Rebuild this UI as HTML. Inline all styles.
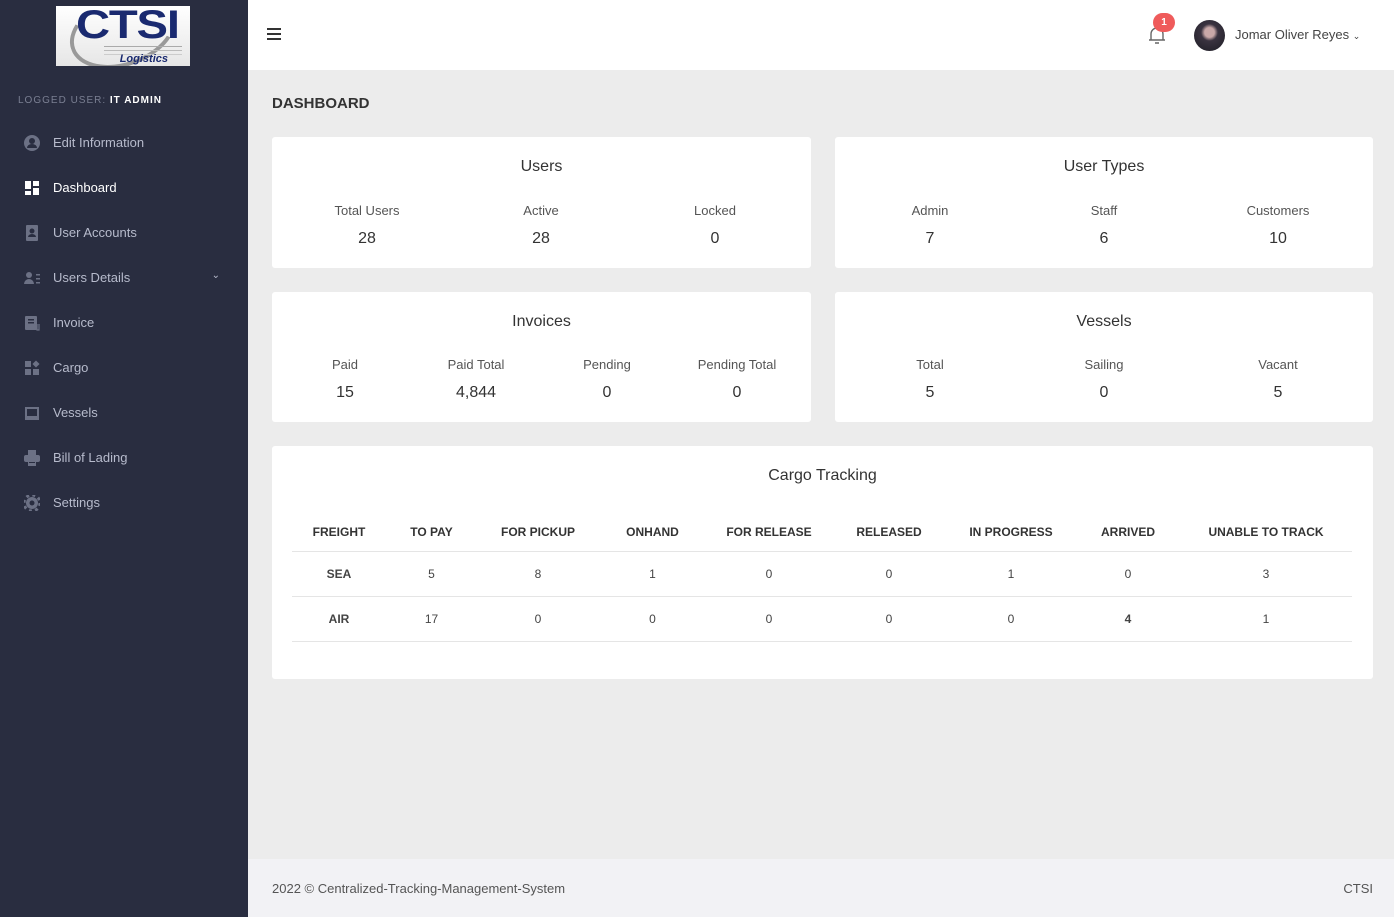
<!DOCTYPE html>
<html><head><meta charset="utf-8"><style>
*{box-sizing:border-box;margin:0;padding:0}
body{width:1394px;height:917px;font-family:"Liberation Sans",sans-serif;background:#ececec;position:relative;overflow:hidden;color:#333}
.sb{position:absolute;left:0;top:0;width:248px;height:917px;background:#292d40}
.logo{position:absolute;left:56px;top:6px;width:134px;height:60px;background:linear-gradient(#fff,#e6e6e6);overflow:hidden}
.logo .t{position:absolute;left:20px;top:-3px;font:900 40px "Liberation Sans",sans-serif;color:#1a2a70;letter-spacing:-1px;transform:scaleX(1.18);transform-origin:left}
.logo .ring{position:absolute;left:12px;top:-10px;width:110px;height:70px;border:4px solid #999;border-radius:50%;transform:rotate(-20deg);border-top-color:transparent;border-right-color:transparent}
.logo .l{position:absolute;right:22px;bottom:1px;font:italic bold 11px "Liberation Sans",sans-serif;color:#1a2a70}
.logo .ln{position:absolute;left:48px;top:40px;width:78px;height:1px;background:#aaa;box-shadow:0 4px 0 #bbb,0 8px 0 #ccc}
.lu{position:absolute;left:18px;top:95px;font-size:10px;letter-spacing:1px;color:#7a7f92}
.lu b{color:#fff;font-weight:bold}
.nav{position:absolute;left:0;top:120px;width:248px}
.it{height:45px;display:flex;align-items:center;padding-left:24px;color:#b7bbcc;font-size:13px;position:relative}
.it.a{color:#fff}
.ic{width:16px;height:16px;margin-right:13px;display:flex;align-items:center;justify-content:center}
.top{position:absolute;left:248px;top:0;right:0;height:70px;background:#fff}
h1{position:absolute;left:272px;top:95px;font-size:15px;font-weight:bold;color:#333}
.card{position:absolute;background:#fff;border-radius:3px}
.ct{position:absolute;left:0;right:0;text-align:center;font-size:16px;color:#333;top:21px}
.st{position:absolute;text-align:center;width:150px;margin-left:-75px}
.st .k{font-size:13px;color:#555}
.st .v{font-size:16px;color:#333;margin-top:12px}
table{position:absolute;left:20px;top:67px;border-collapse:collapse;width:1060px}
th{font-size:12px;font-weight:bold;color:#333;height:38px;text-align:center;border-bottom:1px solid #e5e5e5}
td{font-size:12px;color:#444;height:45px;text-align:center;border-bottom:1px solid #e5e5e5}
td b{font-weight:bold}
.ft{position:absolute;left:248px;right:0;top:859px;height:58px;background:#f2f2f5;font-size:13px;color:#555}
</style></head><body>
<div class="sb">
<div class="logo"><div class="ring"></div><div class="ln"></div><div class="t">CTSI</div><div class="l">Logistics</div></div>
<div class="lu">LOGGED USER: <b>IT ADMIN</b></div>
<div class="nav">
<div class="it"><span class="ic"><svg width="16" height="16"><circle cx="8" cy="8" r="8" fill="#6c7185"/><circle cx="8" cy="6" r="3" fill="#292d40"/><path d="M3 13a5 4 0 0 1 10 0z" fill="#292d40"/></svg></span>Edit Information</div>
<div class="it a"><span class="ic"><svg width="16" height="16" fill="#fff"><rect x="1" y="1" width="6" height="8"/><rect x="9" y="1" width="6" height="5"/><rect x="1" y="11" width="6" height="4"/><rect x="9" y="8" width="6" height="7"/></svg></span>Dashboard</div>
<div class="it"><span class="ic"><svg width="16" height="16"><rect x="2" y="0" width="12" height="16" rx="1" fill="#6c7185"/><circle cx="8" cy="6" r="2.5" fill="#292d40"/><path d="M4 12a4 3 0 0 1 8 0z" fill="#292d40"/></svg></span>User Accounts</div>
<div class="it"><span class="ic"><svg width="18" height="14" fill="#6c7185"><circle cx="5" cy="4" r="3"/><path d="M0 13a5 5 0 0 1 10 0z"/><rect x="12" y="3" width="6" height="1.5"/><rect x="12" y="7" width="6" height="1.5"/><rect x="12" y="11" width="6" height="1.5"/></svg></span>Users Details<span style="position:absolute;right:28px;top:15px;font-size:10px">&#8964;</span></div>
<div class="it"><span class="ic"><svg width="16" height="16"><rect x="1" y="1" width="12" height="14" rx="1" fill="#6c7185"/><rect x="4" y="4" width="6" height="1.5" fill="#292d40"/><rect x="4" y="7" width="6" height="1.5" fill="#292d40"/><path d="M13 9v6h2v-6" fill="none" stroke="#6c7185" stroke-width="1.2"/></svg></span>Invoice</div>
<div class="it"><span class="ic"><svg width="16" height="16" fill="#6c7185"><rect x="1" y="1" width="6" height="6"/><rect x="1" y="9" width="6" height="6"/><rect x="9" y="9" width="6" height="6"/><rect x="9.5" y="1.5" width="5" height="5" transform="rotate(45 12 4)"/></svg></span>Cargo</div>
<div class="it"><span class="ic"><svg width="16" height="16"><rect x="1" y="2" width="14" height="13" fill="#6c7185"/><rect x="3" y="4" width="10" height="7" fill="#292d40"/></svg></span>Vessels</div>
<div class="it"><span class="ic"><svg width="16" height="16" fill="#6c7185"><rect x="4" y="0" width="8" height="5"/><rect x="0" y="5" width="16" height="7" rx="2"/><rect x="4" y="10" width="8" height="6"/><rect x="5" y="12" width="6" height="1" fill="#292d40"/></svg></span>Bill of Lading</div>
<div class="it"><span class="ic"><svg width="16" height="16"><circle cx="8" cy="8" r="6" fill="#6c7185"/><circle cx="8" cy="8" r="8" fill="none" stroke="#6c7185" stroke-width="3" stroke-dasharray="3 3.3"/><circle cx="8" cy="8" r="2.5" fill="#292d40"/></svg></span>Settings</div>
</div></div>
<div class="top">
<div style="position:absolute;left:19px;top:28px;width:14px;height:2px;background:#333;box-shadow:0 5px 0 #333,0 10px 0 #333"></div>
<svg style="position:absolute;left:899px;top:25px" width="20" height="20" fill="none" stroke="#666" stroke-width="1.4"><path d="M4 15V9a6 6 0 0 1 12 0v6M2 15h16M8 18h4"/></svg>
<div style="position:absolute;left:905px;top:13px;width:22px;height:19px;border-radius:10px;background:#ef5b5b;color:#fff;font-size:10px;font-weight:bold;text-align:center;line-height:19px">1</div>
<div style="position:absolute;left:946px;top:20px;width:31px;height:31px;border-radius:50%;background:radial-gradient(circle at 50% 40%,#c9a8a8 0 20%,#3a3340 35%,#1c1c24)"></div>
<div style="position:absolute;left:987px;top:27px;font-size:13px;color:#444">Jomar Oliver Reyes <span style="font-size:9px">&#8964;</span></div>
</div>
<h1>DASHBOARD</h1>
<div class="card" style="left:272px;top:137px;width:539px;height:131px"><div class="ct">Users</div>
<div class="st" style="left:95px;top:66px"><div class="k">Total Users</div><div class="v">28</div></div>
<div class="st" style="left:269px;top:66px"><div class="k">Active</div><div class="v">28</div></div>
<div class="st" style="left:443px;top:66px"><div class="k">Locked</div><div class="v">0</div></div></div>
<div class="card" style="left:835px;top:137px;width:538px;height:131px"><div class="ct">User Types</div>
<div class="st" style="left:95px;top:66px"><div class="k">Admin</div><div class="v">7</div></div>
<div class="st" style="left:269px;top:66px"><div class="k">Staff</div><div class="v">6</div></div>
<div class="st" style="left:443px;top:66px"><div class="k">Customers</div><div class="v">10</div></div></div>
<div class="card" style="left:272px;top:292px;width:539px;height:130px"><div class="ct">Invoices</div>
<div class="st" style="left:73px;top:65px"><div class="k">Paid</div><div class="v">15</div></div>
<div class="st" style="left:204px;top:65px"><div class="k">Paid Total</div><div class="v">4,844</div></div>
<div class="st" style="left:335px;top:65px"><div class="k">Pending</div><div class="v">0</div></div>
<div class="st" style="left:465px;top:65px"><div class="k">Pending Total</div><div class="v">0</div></div></div>
<div class="card" style="left:835px;top:292px;width:538px;height:130px"><div class="ct">Vessels</div>
<div class="st" style="left:95px;top:65px"><div class="k">Total</div><div class="v">5</div></div>
<div class="st" style="left:269px;top:65px"><div class="k">Sailing</div><div class="v">0</div></div>
<div class="st" style="left:443px;top:65px"><div class="k">Vacant</div><div class="v">5</div></div></div>
<div class="card" style="left:272px;top:446px;width:1101px;height:233px"><div class="ct">Cargo Tracking</div>
<table><tr><th style="width:94px">FREIGHT</th><th style="width:91px">TO PAY</th><th style="width:122px">FOR PICKUP</th><th style="width:107px">ONHAND</th><th style="width:126px">FOR RELEASE</th><th style="width:114px">RELEASED</th><th style="width:130px">IN PROGRESS</th><th style="width:104px">ARRIVED</th><th>UNABLE TO TRACK</th></tr>
<tr><td><b>SEA</b></td><td>5</td><td>8</td><td>1</td><td>0</td><td>0</td><td>1</td><td>0</td><td>3</td></tr>
<tr><td><b>AIR</b></td><td>17</td><td>0</td><td>0</td><td>0</td><td>0</td><td>0</td><td><b>4</b></td><td>1</td></tr></table></div>
<div class="ft"><span style="position:absolute;left:24px;top:22px">2022 © Centralized-Tracking-Management-System</span><span style="position:absolute;right:21px;top:22px">CTSI</span></div>
</body></html>
